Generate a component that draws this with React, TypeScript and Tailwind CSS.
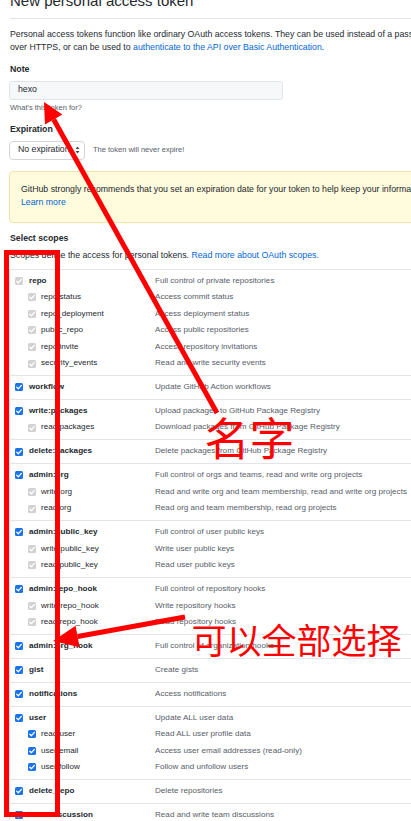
import React from "react";

type Sub = [string, string];
type Group = { name: string; desc: string; main: "on" | "off"; subState?: "on" | "off"; subs?: Sub[] };

const groups: Group[] = [
  {
    name: "repo",
    desc: "Full control of private repositories",
    main: "off",
    subState: "off",
    subs: [
      ["repo:status", "Access commit status"],
      ["repo_deployment", "Access deployment status"],
      ["public_repo", "Access public repositories"],
      ["repo:invite", "Access repository invitations"],
      ["security_events", "Read and write security events"],
    ],
  },
  { name: "workflow", desc: "Update GitHub Action workflows", main: "on" },
  {
    name: "write:packages",
    desc: "Upload packages to GitHub Package Registry",
    main: "on",
    subState: "off",
    subs: [["read:packages", "Download packages from GitHub Package Registry"]],
  },
  { name: "delete:packages", desc: "Delete packages from GitHub Package Registry", main: "on" },
  {
    name: "admin:org",
    desc: "Full control of orgs and teams, read and write org projects",
    main: "on",
    subState: "off",
    subs: [
      ["write:org", "Read and write org and team membership, read and write org projects"],
      ["read:org", "Read org and team membership, read org projects"],
    ],
  },
  {
    name: "admin:public_key",
    desc: "Full control of user public keys",
    main: "on",
    subState: "off",
    subs: [
      ["write:public_key", "Write user public keys"],
      ["read:public_key", "Read user public keys"],
    ],
  },
  {
    name: "admin:repo_hook",
    desc: "Full control of repository hooks",
    main: "on",
    subState: "off",
    subs: [
      ["write:repo_hook", "Write repository hooks"],
      ["read:repo_hook", "Read repository hooks"],
    ],
  },
  { name: "admin:org_hook", desc: "Full control of organization hooks", main: "on" },
  { name: "gist", desc: "Create gists", main: "on" },
  { name: "notifications", desc: "Access notifications", main: "on" },
  {
    name: "user",
    desc: "Update ALL user data",
    main: "on",
    subState: "on",
    subs: [
      ["read:user", "Read ALL user profile data"],
      ["user:email", "Access user email addresses (read-only)"],
      ["user:follow", "Follow and unfollow users"],
    ],
  },
  { name: "delete_repo", desc: "Delete repositories", main: "on" },
  { name: "write:discussion", desc: "Read and write team discussions", main: "on" },
];

function Box({ state }: { state: "on" | "off" }) {
  return (
    <span
      className={
        state === "on"
          ? "inline-flex w-[8px] h-[8px] shrink-0 rounded-[1.5px] bg-[#1a73e8] items-center justify-center"
          : "inline-flex w-[8px] h-[8px] shrink-0 rounded-[1.5px] bg-[#d2d2d2] items-center justify-center"
      }
    >
      <svg viewBox="0 0 8 8" width="8" height="8">
        <path d="M1.7 4.1 L3.3 5.7 L6.4 2.4" stroke="white" strokeWidth="1.3" fill="none" strokeLinecap="round" strokeLinejoin="round" />
      </svg>
    </span>
  );
}

export default function App() {
  return (
    <div className="relative w-[411px] h-[821px] overflow-hidden bg-white font-['Liberation_Sans',Arial,sans-serif] text-[#24292e]">
      <div className="w-[760px] pl-[10px]">
        <div className="mt-[-7.5px] pb-[10px] border-b border-[#e1e4e8] w-[700px] text-[15px] leading-[15px]">
          New personal access token
        </div>
        <p className="mt-[9.5px] text-[8.75px] leading-[13px] whitespace-nowrap">
          Personal access tokens function like ordinary OAuth access tokens. They can be used instead of a password for Git
          <br />
          over HTTPS, or can be used to <span className="text-[#0366d6]">authenticate to the API over Basic Authentication</span>.
        </p>

        <div className="mt-[9px] text-[8.75px] leading-[13px] font-bold">Note</div>
        <div className="mt-[4.5px] ml-[-1px] w-[274px] h-[19px] rounded-[3px] border border-[#e1e4e8] bg-[#f6f8fa] flex items-center pl-[8px] text-[8.75px]">
          hexo
        </div>
        <div className="mt-[2.5px] text-[7.5px] leading-[11px] text-[#586069]">What's this token for?</div>

        <div className="mt-[10px] text-[8.75px] leading-[13px] font-bold">Expiration</div>
        <div className="mt-[4.5px] ml-[-1px] flex items-center gap-[8px]">
          <div className="w-[76px] h-[19px] rounded-[4px] border border-[#d1d5da] bg-white flex items-center pl-[8px] pr-[4px] text-[8.75px]">
            <span className="flex-1 whitespace-nowrap">No expiration</span>
            <svg viewBox="0 0 5 8" width="5" height="8">
              <path d="M2.5 0.5 L4.5 3 L0.5 3 Z M2.5 7.5 L4.5 5 L0.5 5 Z" fill="#444d56" />
            </svg>
          </div>
          <span className="text-[7.5px] text-[#586069]">The token will never expire!</span>
        </div>

        <div className="mt-[11px] ml-[-1px] w-[700px] rounded-[4px] border border-[#f0e2a8] bg-[#fffbdd] pl-[11px] pt-[11.5px] pb-[12.5px] text-[8.75px] leading-[13px] whitespace-nowrap">
          GitHub strongly recommends that you set an expiration date for your token to help keep your information secure.
          <br />
          <span className="text-[#0366d6]">Learn more</span>
        </div>

        <div className="mt-[9.5px] text-[8.75px] leading-[13px] font-bold">Select scopes</div>
        <div className="mt-[4px] text-[8.75px] leading-[13px] whitespace-nowrap">
          Scopes define the access for personal tokens. <span className="text-[#0366d6]">Read more about OAuth scopes.</span>
        </div>

        <div className="mt-[6.5px] ml-[-1px] w-[700px] border-t border-l border-[#e1e4e8] text-[8.125px] leading-[16.55px]">
          {groups.map((g) => (
            <div key={g.name} className="border-b border-[#e1e4e8] pt-[3px] pb-[3.3px]">
              <div className="flex">
                <div className="w-[145px] pl-[5px] flex items-center gap-[6px] font-bold">
                  <Box state={g.main} />
                  <span className="whitespace-nowrap">{g.name}</span>
                </div>
                <div className="text-[#586069] whitespace-nowrap">{g.desc}</div>
              </div>
              {g.subs?.map(([n, d]) => (
                <div key={n} className="flex">
                  <div className="w-[145px] pl-[18px] flex items-center gap-[5px]">
                    <Box state={g.subState ?? "off"} />
                    <span className="whitespace-nowrap">{n}</span>
                  </div>
                  <div className="text-[#586069] whitespace-nowrap">{d}</div>
                </div>
              ))}
            </div>
          ))}
        </div>
      </div>

      <svg className="absolute left-0 top-0 pointer-events-none" width="411" height="821" viewBox="0 0 411 821">
        <rect x="6.5" y="252.5" width="51" height="562" fill="none" stroke="#ff0000" strokeWidth="5" />
        <line x1="217" y1="413" x2="53.7" y2="119.5" stroke="#ff0000" strokeWidth="5" />
        <polygon points="44,102 44.96,124.4 62.4,114.6" fill="#ff0000" />
        <line x1="185" y1="617" x2="77.6" y2="636.5" stroke="#ff0000" strokeWidth="5" />
        <polygon points="53,641 79.6,647.3 75.6,625.7" fill="#ff0000" />
      </svg>
      <span className="absolute left-[204.5px] top-[414px] text-[45px] leading-none text-[#ff0000] whitespace-nowrap font-['Noto_Sans_CJK_SC',sans-serif]">
        名字
      </span>
      <span className="absolute left-[191.5px] top-[621px] text-[35px] leading-none text-[#ff0000] whitespace-nowrap font-['Noto_Sans_CJK_SC',sans-serif]">
        可以全部选择
      </span>
    </div>
  );
}
